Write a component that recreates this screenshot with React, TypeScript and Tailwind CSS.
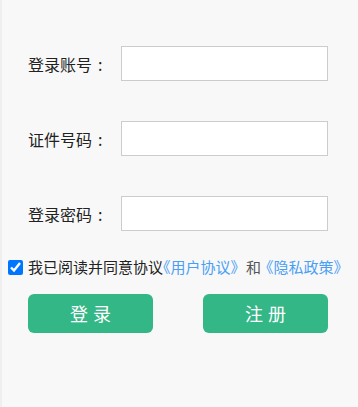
import React from "react";

const fields = ["登录账号", "证件号码", "登录密码"];

export default function App() {
  return (
    <div
      className="w-full h-[407px] bg-[#f8f8f8] border-l-2 border-[#efefef] pt-[46px]"
      style={{ fontFamily: '"Noto Sans CJK SC", "Noto Sans", sans-serif' }}
    >
      <div className="flex flex-col gap-[40px]">
        {fields.map((f) => (
          <div key={f} className="flex items-center h-[35px]">
            <label className="w-[119px] pl-[26px] text-[16px] text-[#222] whitespace-nowrap flex items-center">
              <span>{f}</span>
              <span className="ml-[6px]">:</span>
            </label>
            <input
              type={f === "登录密码" ? "password" : "text"}
              className="w-[207px] h-[35px] border border-[#cccccc] bg-white outline-none px-2"
            />
          </div>
        ))}
      </div>
      <div className="flex items-center mt-[28px] h-[16px] pl-[6px] text-[15px] whitespace-nowrap">
        <input type="checkbox" defaultChecked className="w-[15px] h-[15px] m-0 mr-[5px]" />
        <span className="text-[#222]">我已阅读并同意协议</span>
        <span className="text-[#4a9ff5] [font-feature-settings:'halt']">《用户协议》</span>
        <span className="text-[#555] ml-[8px]">和</span>
        <span className="text-[#4a9ff5] ml-[5px] [font-feature-settings:'halt']">《隐私政策》</span>
      </div>
      <div className="flex mt-[19px] pl-[26px] gap-[50px]">
        <button className="w-[125px] h-[39px] rounded-[6px] bg-[#34b786] text-white text-[18px] tracking-[5px] pl-[5px]">
          登录
        </button>
        <button className="w-[125px] h-[39px] rounded-[6px] bg-[#34b786] text-white text-[18px] tracking-[5px] pl-[5px]">
          注册
        </button>
      </div>
    </div>
  );
}
